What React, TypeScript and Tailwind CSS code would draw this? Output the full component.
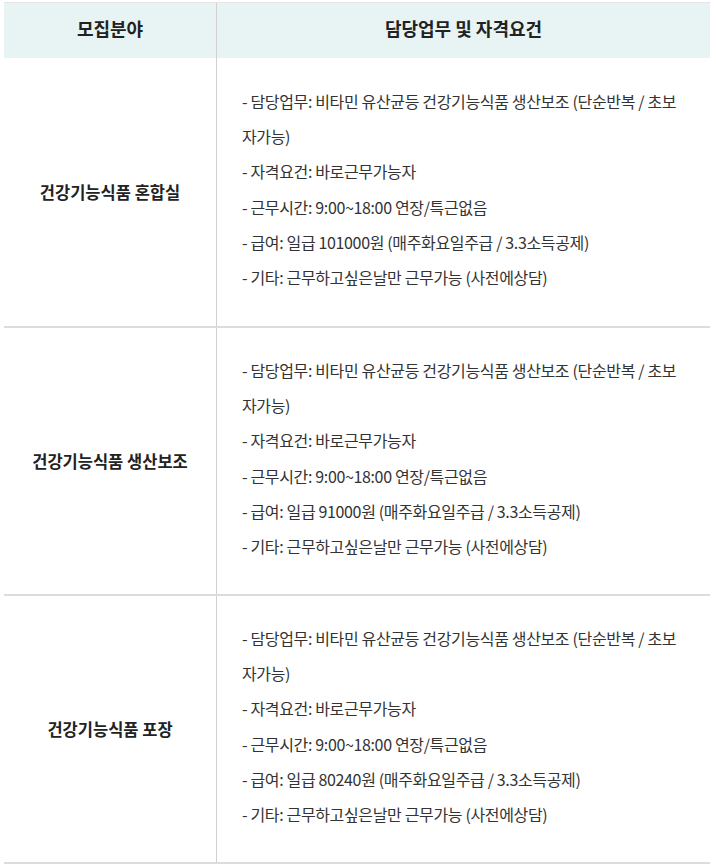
import React from "react";

const rows = [
  { title: "건강기능식품 혼합실", pay: "101000" },
  { title: "건강기능식품 생산보조", pay: "91000" },
  { title: "건강기능식품 포장", pay: "80240" },
];

export default function App() {
  return (
    <div
      className="w-[716px] h-[864px] bg-white pt-[2px] pl-[4px] pr-[6px] text-[#333]"
      style={{ fontFamily: '"Noto Sans CJK KR", "Noto Sans", sans-serif' }}
    >
      <div className="border-t border-[#e5e5e5] border-b-2 border-b-[#dcdcdc]">
        <div className="grid grid-cols-[212px_1fr] h-[55px] bg-[#e8f4f4]">
          <div className="flex items-center justify-center pb-[5px] text-[18px] font-bold text-[#222]">
            모집분야
          </div>
          <div className="flex items-center justify-center pb-[5px] text-[18px] font-bold text-[#222] border-l border-[#d0d0d0]">
            담당업무 및 자격요건
          </div>
        </div>
        {rows.map((r, i) => (
          <div
            key={i}
            className={
              "grid grid-cols-[212px_1fr] h-[268px]" +
              (i > 0 ? " border-t-2 border-[#dcdcdc]" : "")
            }
          >
            <div className="flex items-center justify-center text-[16.5px] font-bold text-[#222]">
              {r.title}
            </div>
            <div className="border-l border-[#d0d0d0] pl-[25px] pr-[10px] pb-[5px] flex flex-col justify-center text-[16px] leading-[35.2px] tracking-[-0.35px] whitespace-nowrap">
              <div>- 담당업무: 비타민 유산균등 건강기능식품 생산보조 (단순반복 / 초보</div>
              <div>자가능)</div>
              <div>- 자격요건: 바로근무가능자</div>
              <div>- 근무시간: 9:00~18:00 연장/특근없음</div>
              <div>- 급여: 일급 {r.pay}원 (매주화요일주급 / 3.3소득공제)</div>
              <div>- 기타: 근무하고싶은날만 근무가능 (사전에상담)</div>
            </div>
          </div>
        ))}
      </div>
    </div>
  );
}
